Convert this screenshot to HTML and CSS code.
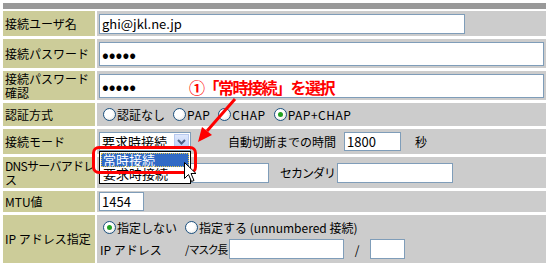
FILE: index.html
```html
<!DOCTYPE html>
<html lang="ja">
<head>
<meta charset="UTF-8">
<title>接続設定</title>
<link rel="stylesheet" href="styles.css">
</head>
<body>
<div class="page">
  <div class="topbar"></div>

  <div class="form">
    <div class="label">接続ユーザ名</div>
    <div class="value">
      <input type="text" class="field w-user" value="ghi@jkl.ne.jp">
    </div>

    <div class="label">接続パスワード</div>
    <div class="value">
      <input type="password" class="field w-full pass" value="aaaaa">
    </div>

    <div class="label">接続パスワード<br>確認</div>
    <div class="value">
      <input type="password" class="field w-full pass" value="aaaaa">
    </div>

    <div class="label">認証方式</div>
    <div class="value">
      <span class="opt"><span class="radio"></span>認証なし</span>
      <span class="opt latin"><span class="radio"></span>PAP</span>
      <span class="opt latin"><span class="radio"></span>CHAP</span>
      <span class="opt latin"><span class="radio on"></span>PAP+CHAP</span>
    </div>

    <div class="label">接続モード</div>
    <div class="value">
      <div class="select">
        <span class="select-text">要求時接続</span>
        <span class="select-btn">
          <svg width="9" height="6" viewBox="0 0 9 6"><path d="M1 1 L4.5 4.5 L8 1" fill="none" stroke="#4d6185" stroke-width="2"/></svg>
        </span>
      </div>
      <span class="gap-label">自動切断までの時間</span>
      <input type="text" class="field w-time" value="1800">
      <span class="unit">秒</span>
    </div>

    <div class="label tight">DNSサーバアドレ<br>ス</div>
    <div class="value">
      <input type="text" class="field w-dns1">
      <span class="sub-label">セカンダリ</span>
      <input type="text" class="field w-dns2">
    </div>

    <div class="label">MTU値</div>
    <div class="value">
      <input type="text" class="field w-mtu" value="1454">
    </div>

    <div class="label">IP アドレス指定</div>
    <div class="value stack">
      <div class="line">
        <span class="opt"><span class="radio on"></span>指定しない</span>
        <span class="opt"><span class="radio"></span>指定する (unnumbered 接続)</span>
      </div>
      <div class="line">
        <span class="ip-label">IP アドレス</span>
        <span class="mask-label">/ マスク長</span>
        <input type="text" class="field w-ip">
        <span class="slash">/</span>
        <input type="text" class="field w-mask">
      </div>
    </div>
  </div>

  <!-- 説明用の注釈 -->
  <div class="dropdown">
    <div class="item selected">常時接続</div>
    <div class="item">要求時接続</div>
  </div>
  <div class="note">①「常時接続」を選択</div>
  <div class="callout"></div>
  <svg class="overlay" width="549" height="266" viewBox="0 0 549 266">
    <line x1="235" y1="99" x2="207" y2="131" stroke="#ff0000" stroke-width="3"/>
    <polygon points="198,142 212,135 202,127" fill="#ff0000"/>
    <path d="M184.5 162.5 L184.5 178.5 L188.5 174.5 L191.5 181.5 L194 180.5 L191 173.5 L196 173.5 Z" fill="#fff" stroke="#000" stroke-width="1"/>
  </svg>
</div>
</body>
</html>
```

FILE: styles.css
```css
body {
  margin: 0;
  background: white;
  font-family: "Noto Sans CJK JP", "DejaVu Sans", sans-serif;
  font-size: 12px;
  color: #000;
}
.page {
  position: relative;
  width: 543px;
  height: 260px;
  padding: 3px;
}
.topbar {
  height: 6px;
  background: #999999;
  margin-bottom: 2px;
}
.form {
  display: grid;
  grid-template-columns: 92px 449px;
  grid-template-rows: 25px 29px 29px 23px 25px 31px 21px 48px;
  column-gap: 2px;
  row-gap: 3px;
}
.label {
  background: #cccc99;
  display: flex;
  align-items: center;
  padding-left: 2px;
  line-height: 14px;
  white-space: nowrap;
}
.label.tight {
  letter-spacing: -0.7px;
}
.value {
  background: #cccccc;
  display: flex;
  align-items: center;
  padding-left: 2px;
  white-space: nowrap;
}
.value.stack {
  flex-direction: column;
  align-items: flex-start;
  justify-content: center;
  gap: 3px;
}
.line {
  display: flex;
  align-items: center;
}
.field {
  box-sizing: border-box;
  border: 1px solid #7f9db9;
  background: white;
  font-family: "Noto Sans CJK JP", "DejaVu Sans", sans-serif;
  font-size: 13px;
  padding: 0 2px;
  margin: 0;
  outline: none;
}
.pass {
  font-size: 20px;
}
.w-user { width: 366px; height: 20px; }
.w-full { width: 445px; height: 24px; }
.w-time { width: 57px; height: 19px; margin-left: 8px; }
.w-dns1 { width: 170px; height: 20px; }
.w-dns2 { width: 116px; height: 20px; margin-left: 2px; }
.w-mtu { width: 45px; height: 19px; }
.w-ip { width: 115px; height: 20px; margin-left: 2px; }
.w-mask { width: 35px; height: 20px; }
.opt {
  display: inline-flex;
  align-items: center;
  margin-right: 4px;
}
.opt.latin {
  letter-spacing: 0.5px;
}
.radio {
  box-sizing: border-box;
  width: 13px;
  height: 13px;
  margin: 0 1px 0 4px;
  border: 1px solid #1c5180;
  border-radius: 50%;
  background: radial-gradient(circle at 40% 40%, #ffffff 40%, #dcdcd7 100%);
  display: inline-flex;
  align-items: center;
  justify-content: center;
}
.radio.on::after {
  content: "";
  width: 5px;
  height: 5px;
  border-radius: 50%;
  background: #21a121;
}
.select {
  box-sizing: border-box;
  width: 92px;
  height: 19px;
  border: 1px solid #7f9db9;
  background: white;
  display: flex;
  align-items: center;
  justify-content: space-between;
}
.select-text {
  font-size: 13px;
  padding-left: 2px;
}
.select-btn {
  width: 15px;
  height: 15px;
  margin-right: 1px;
  background: linear-gradient(#dfe8fd, #b9cdf6);
  border: 1px solid #b7c9ef;
  box-sizing: border-box;
  display: flex;
  align-items: center;
  justify-content: center;
}
.gap-label { margin-left: 37px; }
.unit { margin-left: 14px; }
.sub-label { margin-left: 11px; letter-spacing: -1px; }
.ip-label { margin-left: 1px; width: 85px; }
.mask-label { font-size: 11px; letter-spacing: -1.5px; white-space: pre; }
.slash { margin: 0 10px 0 11px; }
.dropdown {
  position: absolute;
  left: 99px;
  top: 151px;
  width: 92px;
  box-sizing: border-box;
  border: 1px solid #000;
  background: white;
  padding: 1px 1px 2px;
  font-size: 13px;
}
.item {
  height: 14px;
  line-height: 14px;
  padding-left: 2px;
}
.item.selected {
  background: #316ac5;
  color: white;
  outline: 1px dotted #e6c84a;
  outline-offset: -1px;
}
.note {
  position: absolute;
  left: 189px;
  top: 77px;
  color: #ff0000;
  font-size: 16px;
  font-weight: bold;
  line-height: 20px;
  letter-spacing: -1.5px;
}
.callout {
  position: absolute;
  left: 92px;
  top: 146px;
  width: 99px;
  height: 22px;
  border: 3px solid #ff0000;
  border-radius: 7px;
}
.overlay {
  position: absolute;
  left: 0;
  top: 0;
  pointer-events: none;
}
```
